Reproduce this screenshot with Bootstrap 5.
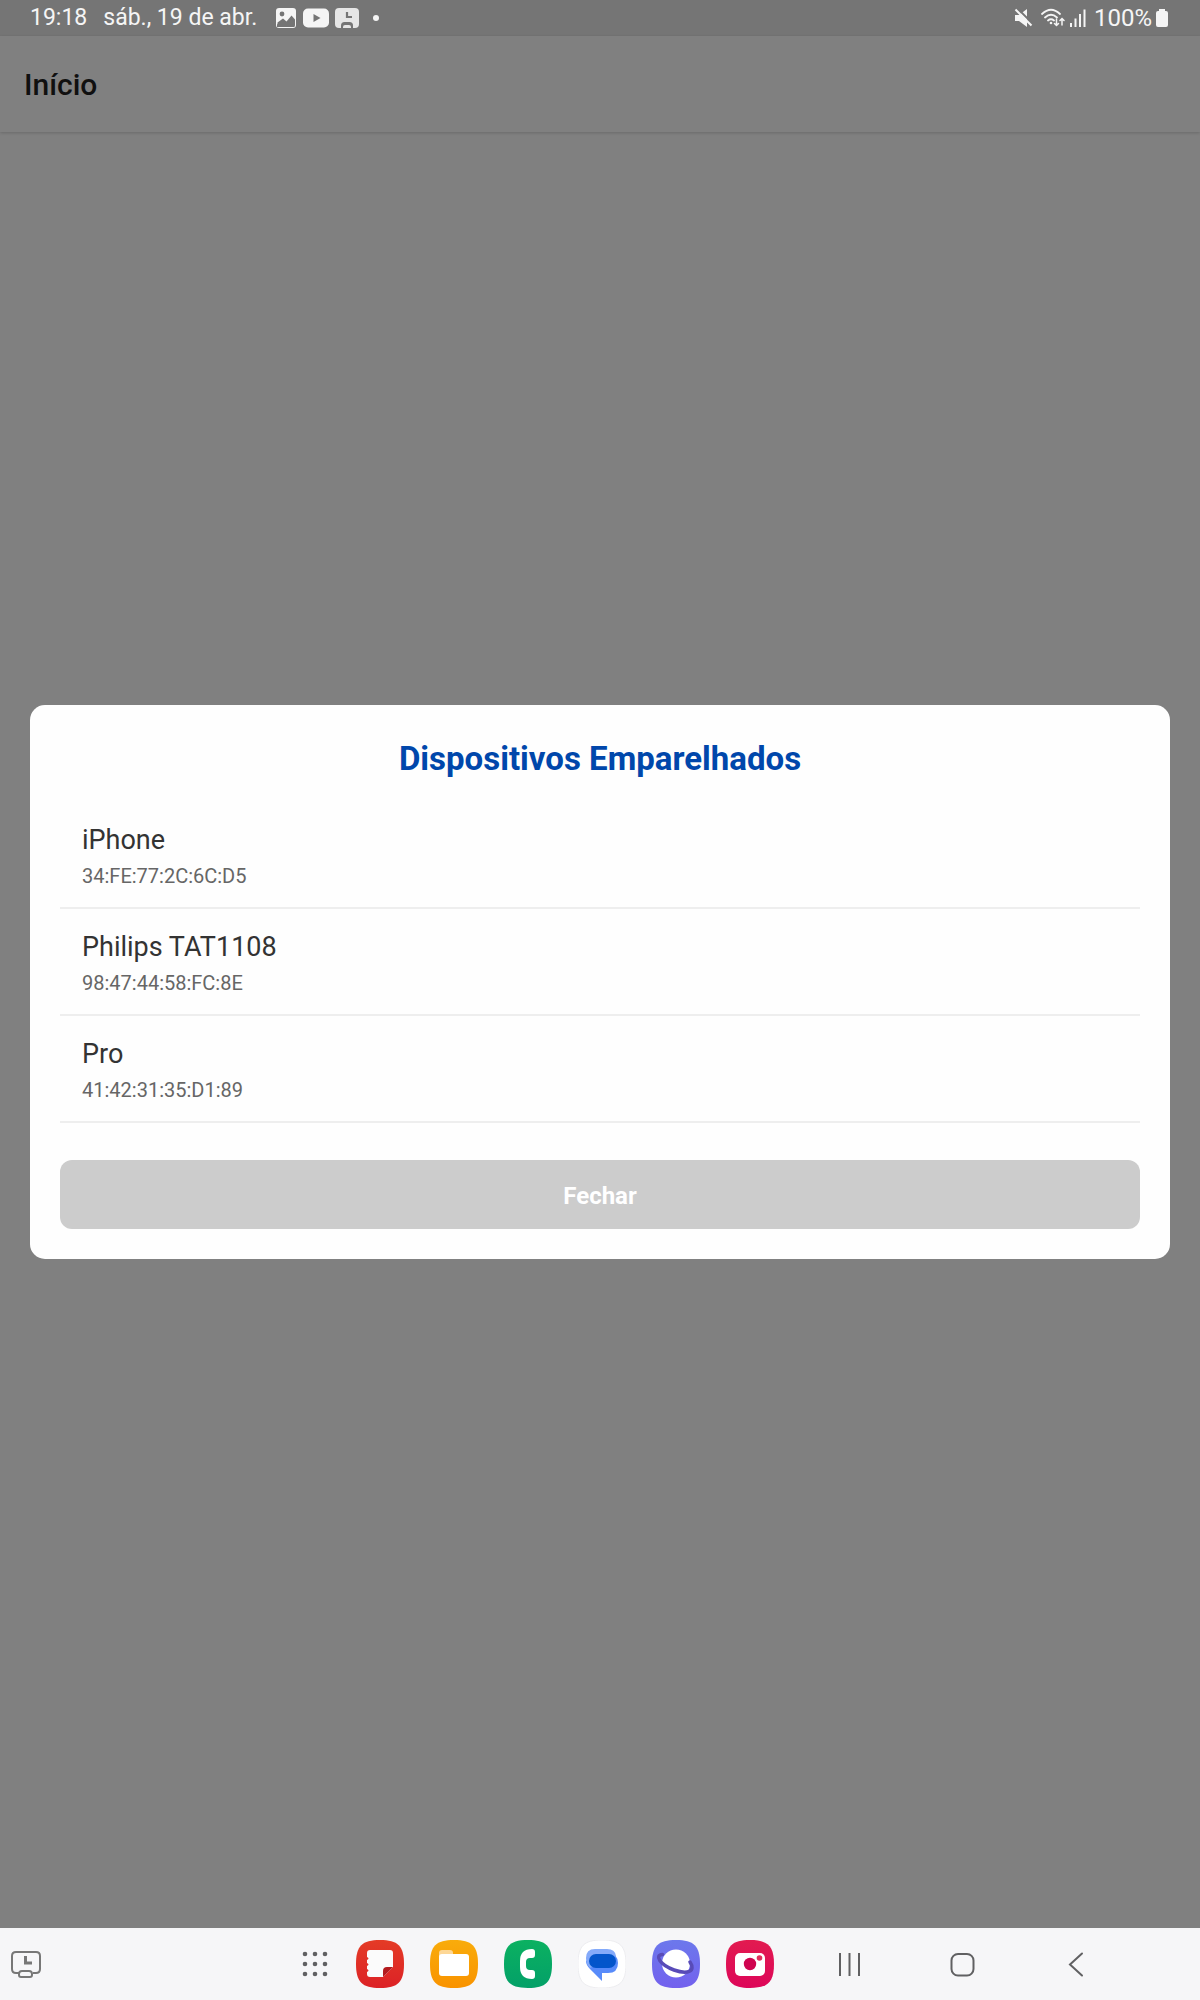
<!DOCTYPE html>
<html lang="pt-BR">
<head>
<meta charset="utf-8">
<meta name="viewport" content="width=device-width, initial-scale=1">
<title>Dispositivos Emparelhados</title>
<link rel="stylesheet" href="https://cdn.jsdelivr.net/npm/bootstrap@5.3.0/dist/css/bootstrap.min.css">
<style>
body{font-family:Roboto,"Noto Sans",sans-serif;background:#808080}
svg{display:block;flex:none}
.status{height:36px;padding:0 32px 0 30px;background:#757575;color:#f5f5f5;font-size:24px;line-height:36px}
.clock{font-size:23px}
.notices{margin-left:18px;gap:6px}
.appbar{height:96px;padding:2px 24px 0;background:#808080;box-shadow:0 1px 3px rgba(0,0,0,.18)}
.appbar-title{margin:0;font-size:30px;line-height:36px;font-weight:500;color:#101010}
.overlay{padding:0 30px}
.sheet{border-radius:15px;padding:30px;background:#fefefe}
.sheet-title{font-size:33px;line-height:48px;margin-bottom:19px;color:#0047ab}
.device{padding:22px 22px 19px;border-bottom:2px solid #eee;color:#333}
.device:hover{background:#fafafa}
.device-name{font-size:27px;line-height:32px;margin-bottom:8px}
.device-mac{font-size:20px;line-height:24px;color:#666}
.btn-close-sheet,.btn-close-sheet:hover{margin-top:37px;height:69px;padding:8px 12px 6px;border:0;border-radius:12px;background:#ccc;color:#fff;font-size:24px;line-height:28px}
.taskbar{height:72px;background:#f6f6f8;padding:0 100px 0 10px}
.tb{width:48px;height:48px;border:0;padding:0;background:none}
.apps{gap:26px;margin:0 52px 0 17px}
.keys{gap:65px}
</style>
<script src="https://cdn.jsdelivr.net/npm/bootstrap@5.3.0/dist/js/bootstrap.bundle.min.js"></script>
</head>
<body>
<div class="d-flex flex-column min-vh-100">
  <div class="status d-flex justify-content-between align-items-center">
    <div class="clock d-flex align-items-center">
      <span>19:18</span><span class="ms-3">sáb., 19 de abr.</span>
      <div class="notices d-flex align-items-center">
        <svg width="22" height="22" viewBox="0 0 22 22"><rect x="1" y="1" width="20" height="20" rx="3" fill="#f5f5f5"/><circle cx="7" cy="7" r="2.4" fill="#757575"/><path d="M2.500 15.500 8 11.500l3.500 3 5-6 3.500 4V18a1.500 1.500 0 0 1-1.500 1.500H4A1.500 1.500 0 0 1 2.500 18z" fill="#757575"/><path d="M2 17.500 8 14l3.500 3 5-5 3 3V20H2z" fill="#757575"/></svg>
        <svg width="26" height="20" viewBox="0 0 26 20"><rect width="26" height="19" y=".5" rx="5" fill="#f5f5f5"/><path d="M10.500 6v8l7-4z" fill="#757575"/></svg>
        <svg width="24" height="22" viewBox="0 0 24 22"><rect width="24" height="20" y="1" rx="4" fill="#e6e6e6"/><path d="M12 5v5h5" fill="none" stroke="#757575" stroke-width="2.200"/><path d="M6 22v-3.500q0-3.500 3.500-3.500h5q3.500 0 3.500 3.500V22z" fill="#757575"/><path d="M8 21v-1q0-2 2-2h4q2 0 2 2v1z" fill="#e6e6e6"/></svg>
        <svg class="ms-2" width="6" height="6" viewBox="0 0 6 6"><circle cx="3" cy="3" r="3" fill="#f5f5f5"/></svg>
      </div>
    </div>
    <div class="d-flex align-items-center">
      <svg width="19" height="20" viewBox="0 0 19 20"><path d="M1 7h4l8-6v18l-8-6H1z" fill="#f5f5f5"/><path d="M3 0 19 16" stroke="#757575" stroke-width="2"/><path d="M1.500 1.500 17.500 17.500" stroke="#f5f5f5" stroke-width="2"/></svg>
      <svg class="ms-2" width="24" height="20" viewBox="0 0 24 20"><g fill="none" stroke="#f5f5f5" stroke-width="1.800" stroke-linecap="round"><path d="M1 6Q10-2.500 19 6M4 9.500q6-5.500 12 0M7 12.500q3-2.500 6 0"/><path d="M15.500 11v6.500M13.500 15.500l2 2 2-2M21 17v-6.500M19 12.500l2-2 2 2" stroke-width="1.500"/></g><circle cx="10" cy="15" r="1.300" fill="#f5f5f5"/></svg>
      <svg class="ms-1" width="17" height="20" viewBox="0 0 17 20"><path d="M2 15v4M6.500 10.500V19M11 6v13M15.500 1.500V19" stroke="#f5f5f5" stroke-width="2"/></svg>
      <span class="ms-2">100%</span>
      <svg class="ms-1" width="12" height="18" viewBox="0 0 12 18"><path d="M3 0h6v2h1q2 0 2 2v12q0 2-2 2H2q-2 0-2-2V4q0-2 2-2h1z" fill="#f5f5f5"/></svg>
    </div>
  </div>
  <main class="flex-grow-1 position-relative d-flex flex-column">
    <header class="appbar d-flex align-items-center"><h1 class="appbar-title">Início</h1></header>
    <div class="overlay position-absolute top-0 start-0 w-100 h-100 d-flex align-items-center" role="dialog" aria-labelledby="sheetTitle">
      <section class="sheet w-100">
        <h2 class="sheet-title fw-bold text-center" id="sheetTitle">Dispositivos Emparelhados</h2>
        <div>
          <a href="#" class="device d-block text-decoration-none"><div class="device-name">iPhone</div><div class="device-mac">34:FE:77:2C:6C:D5</div></a>
          <a href="#" class="device d-block text-decoration-none"><div class="device-name">Philips TAT1108</div><div class="device-mac">98:47:44:58:FC:8E</div></a>
          <a href="#" class="device d-block text-decoration-none"><div class="device-name">Pro</div><div class="device-mac">41:42:31:35:D1:89</div></a>
        </div>
        <button type="button" class="btn btn-close-sheet w-100 fw-bold">Fechar</button>
      </section>
    </div>
  </main>
  <nav class="taskbar d-flex align-items-center" aria-label="Barra de tarefas">
    <button class="border-0 p-0 bg-transparent" aria-label="Rotinas"><svg width="32" height="30" viewBox="0 0 32 30"><g fill="none" stroke="#777" stroke-width="2"><path d="M9 24H6q-4 0-4-4V7q0-4 4-4h20q4 0 4 4v13q0 4-4 4h-3"/><path d="M9 26v-1q0-3 3-3h7q3 0 3 3v1q0 2-2 2h-9q-2 0-2-2z"/><path d="M15.500 7v7H22" stroke-width="3"/></g></svg></button>
    <div class="d-flex align-items-center ms-auto">
      <button class="tb" aria-label="Todos os apps"><svg width="48" height="48" viewBox="0 0 48 48" fill="#606062"><circle cx="14" cy="14" r="2.300"/><circle cx="24" cy="14" r="2.300"/><circle cx="34" cy="14" r="2.300"/><circle cx="14" cy="24" r="2.300"/><circle cx="24" cy="24" r="2.300"/><circle cx="34" cy="24" r="2.300"/><circle cx="14" cy="34" r="2.300"/><circle cx="24" cy="34" r="2.300"/><circle cx="34" cy="34" r="2.300"/></svg></button>
      <div class="apps d-flex">
        <button class="tb" aria-label="Notas"><svg width="48" height="48" viewBox="0 0 48 48"><defs><linearGradient id="g1" x2="0" y2="1"><stop stop-color="#e43b26"/><stop offset="1" stop-color="#dc2226"/></linearGradient><linearGradient id="g2" x2="0" y2="1"><stop stop-color="#f9ac0b"/><stop offset="1" stop-color="#f99300"/></linearGradient><linearGradient id="g3" x2="0" y2="1"><stop stop-color="#0bb161"/><stop offset="1" stop-color="#03a068"/></linearGradient><linearGradient id="g4" x2="0" y2="1"><stop stop-color="#6c78ec"/><stop offset="1" stop-color="#7361ee"/></linearGradient><linearGradient id="g5" x2="0" y2="1"><stop stop-color="#e21b50"/><stop offset="1" stop-color="#dd0659"/></linearGradient><path id="sq" d="M24 0C42 0 48 6 48 24S42 48 24 48 0 42 0 24 6 0 24 0z"/></defs><use href="#sq" fill="url(#g1)"/><path d="M14 10h20q3 0 3 3v14L27 37H14q-3 0-3-3v-2q3-1.500 0-3v-3q3-1.500 0-3v-3q3-1.500 0-3v-4q0-3 3-3z" fill="#fbfbfb"/><path d="M27 37v-6q0-4 4-4h6z" fill="#b31b1e"/></svg></button>
        <button class="tb" aria-label="Meus arquivos"><svg width="48" height="48" viewBox="0 0 48 48"><use href="#sq" fill="url(#g2)"/><path d="M9 18v-5q0-3 3-3h8q3 0 3 3v5z" fill="#fdd796"/><rect x="9" y="14" width="30" height="22" rx="3" fill="#fff"/></svg></button>
        <button class="tb" aria-label="Telefone"><svg width="48" height="48" viewBox="0 0 48 48"><use href="#sq" fill="url(#g3)"/><path d="M28 9q3 0 3 3v3q0 3-3 3h-2q-4 0-4 4v4q0 4 4 4h2q3 0 3 3v3q0 3-3 3-12 0-12-12v-6Q16 9 28 9z" fill="#fff"/></svg></button>
        <button class="tb" aria-label="Mensagens"><svg width="48" height="48" viewBox="0 0 48 48"><use href="#sq" fill="#fff" stroke="#ededf0"/><path d="M17 14h14q9 0 9 9 0 10-10 10h-6v8l-12-12q-4-4-4-8z" fill="#588bfa"/><path d="M8 18q0-9 9-9h12q8 0 9 7L12 28q-4-4-4-10z" fill="#84aafa"/><rect x="11" y="14" width="27" height="14" rx="7" fill="#0355cb"/></svg></button>
        <button class="tb" aria-label="Internet"><svg width="48" height="48" viewBox="0 0 48 48"><use href="#sq" fill="url(#g4)"/><circle cx="24" cy="23.500" r="14" fill="#fff"/><path d="M10.500 14.500C2 15 8 25 22 30s22 1 16-8" fill="none" stroke="#584bb8" stroke-width="3.500" stroke-linecap="round"/></svg></button>
        <button class="tb" aria-label="Câmera"><svg width="48" height="48" viewBox="0 0 48 48"><use href="#sq" fill="url(#g5)"/><rect x="9" y="13" width="30" height="23" rx="5" fill="#fff"/><circle cx="24" cy="24" r="6.200" fill="#cf044f"/><circle cx="33.500" cy="18" r="2.800" fill="#e0305c"/></svg></button>
      </div>
      <div class="keys d-flex">
        <button class="tb" aria-label="Recentes"><svg width="48" height="48" viewBox="0 0 48 48"><path d="M14 13v23M23.500 13v23M33 13v23" stroke="#606062" stroke-width="2"/></svg></button>
        <button class="tb" aria-label="Início"><svg width="48" height="48" viewBox="0 0 48 48"><rect x="12.500" y="14" width="22" height="21.500" rx="6.500" fill="none" stroke="#606062" stroke-width="2"/></svg></button>
        <button class="tb" aria-label="Voltar"><svg width="48" height="48" viewBox="0 0 48 48"><path d="M30 13.500 18 24.500 30 35.500" fill="none" stroke="#606062" stroke-width="2" stroke-linecap="round"/></svg></button>
      </div>
    </div>
  </nav>
</div>
</body>
</html>
